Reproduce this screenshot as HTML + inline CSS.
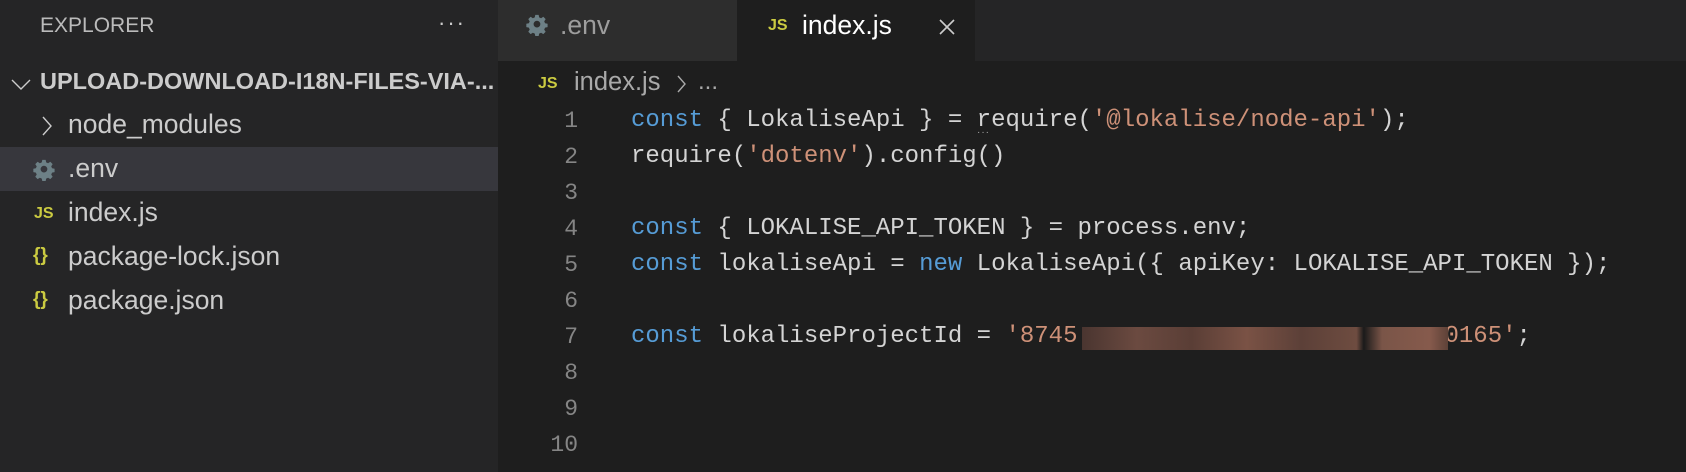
<!DOCTYPE html>
<html><head><meta charset="utf-8"><style>
*{margin:0;padding:0;box-sizing:border-box}
body{width:1686px;height:472px;overflow:hidden;background:#1e1e1e;font-family:"Liberation Sans",sans-serif;position:relative}
.side{position:absolute;left:0;top:0;width:498px;height:472px;background:#252526}
.t{position:absolute;white-space:pre;color:#cccccc}
.tabbar{position:absolute;left:498px;top:0;width:1188px;height:61px;background:#252526}
.code{position:absolute;font-family:"Liberation Mono",monospace;font-size:24px;white-space:pre;color:#d4d4d4;line-height:36px}
.k{color:#569cd6}.s{color:#ce9178}
.ln{position:absolute;left:520px;width:58px;text-align:right;font-family:"Liberation Mono",monospace;font-size:23px;color:#858585;line-height:36px}
.js{font-family:"Liberation Sans",sans-serif;font-weight:bold;color:#cbcb41;font-size:16px;position:absolute}
</style></head><body>
<div class="side"></div>
<div class="t" style="left:40px;top:14px;font-size:21px;color:#bbbbbb">EXPLORER</div>
<div class="t" style="left:438px;top:10px;font-size:22px;color:#cccccc;letter-spacing:2px">···</div>
<svg style="position:absolute;left:10px;top:76px" width="22" height="16"><path d="M2 4 L11 13 L20 4" stroke="#cccccc" stroke-width="1.4" fill="none"/></svg>
<div class="t" style="left:40px;top:68px;font-size:23.5px;font-weight:bold;color:#cccccc">UPLOAD-DOWNLOAD-I18N-FILES-VIA-...</div>
<svg style="position:absolute;left:40px;top:115px" width="14" height="22"><path d="M3 2 L11 11 L3 20" stroke="#cccccc" stroke-width="1.4" fill="none"/></svg>
<div class="t" style="left:68px;top:109px;font-size:26.5px">node_modules</div>
<div style="position:absolute;left:0;top:147px;width:498px;height:44px;background:#37373d"></div>
<svg style="position:absolute;left:33px;top:159px" width="22" height="22" viewBox="0 0 24 24"><path fill="#6d8086" d="M10 1h4l.6 3 2.3 1 2.6-1.7 2.8 2.8L20.6 8.7l1 2.3 3 .6v4l-3 .6-1 2.3 1.7 2.6-2.8 2.8-2.6-1.7-2.3 1-.6 3h-4l-.6-3-2.3-1-2.6 1.7-2.8-2.8 1.7-2.6-1-2.3-3-.6v-4l3-.6 1-2.3L1.7 6.1 4.5 3.3 7.1 5l2.3-1z M12 8a4 4 0 1 0 0 8a4 4 0 1 0 0-8z" transform="scale(.92) translate(1 0)"/></svg>
<div class="t" style="left:68px;top:153px;font-size:26.5px">.env</div>
<div class="js" style="left:34px;top:205px">JS</div>
<div class="t" style="left:68px;top:197px;font-size:26.5px">index.js</div>
<div class="t" style="left:33px;top:245px;font-size:19px;font-weight:bold;color:#cbcb41">{}</div>
<div class="t" style="left:68px;top:241px;font-size:26.5px">package-lock.json</div>
<div class="t" style="left:33px;top:289px;font-size:19px;font-weight:bold;color:#cbcb41">{}</div>
<div class="t" style="left:68px;top:285px;font-size:26.5px">package.json</div>

<div class="tabbar"></div>
<div style="position:absolute;left:498px;top:0;width:239px;height:61px;background:#2d2d2d"></div>
<svg style="position:absolute;left:526px;top:14px" width="22" height="22" viewBox="0 0 24 24"><path fill="#6d8086" d="M10 1h4l.6 3 2.3 1 2.6-1.7 2.8 2.8L20.6 8.7l1 2.3 3 .6v4l-3 .6-1 2.3 1.7 2.6-2.8 2.8-2.6-1.7-2.3 1-.6 3h-4l-.6-3-2.3-1-2.6 1.7-2.8-2.8 1.7-2.6-1-2.3-3-.6v-4l3-.6 1-2.3L1.7 6.1 4.5 3.3 7.1 5l2.3-1z M12 8a4 4 0 1 0 0 8a4 4 0 1 0 0-8z" transform="scale(.92) translate(1 0)"/></svg>
<div class="t" style="left:560px;top:10px;font-size:26.5px;color:#9d9d9d">.env</div>
<div style="position:absolute;left:737px;top:0;width:238px;height:61px;background:#1e1e1e"></div>
<div class="js" style="left:768px;top:17px">JS</div>
<div class="t" style="left:802px;top:10px;font-size:26.5px;color:#ffffff">index.js</div>
<svg style="position:absolute;left:938px;top:18px" width="18" height="18"><path d="M2 2L16 16M16 2L2 16" stroke="#cccccc" stroke-width="1.6"/></svg>

<div class="js" style="left:538px;top:75px">JS</div>
<div class="t" style="left:574px;top:68px;font-size:25.5px;color:#a9a9a9">index.js</div>
<svg style="position:absolute;left:676px;top:74px" width="12" height="20"><path d="M2 2L9 10L2 18" stroke="#a9a9a9" stroke-width="1.4" fill="none"/></svg>
<div class="t" style="left:698px;top:68px;font-size:24px;color:#a9a9a9">...</div>

<div class="ln" style="top:103px">1<br>2<br>3<br>4<br>5<br>6<br>7<br>8<br>9<br>10</div>
<div class="code" style="left:631px;top:103px"><span class="k">const</span> { LokaliseApi } = require(<span class="s">'@lokalise/node-api'</span>);
require(<span class="s">'dotenv'</span>).config()

<span class="k">const</span> { LOKALISE_API_TOKEN } = process.env;
<span class="k">const</span> lokaliseApi = <span class="k">new</span> LokaliseApi({ apiKey: LOKALISE_API_TOKEN });

<span class="k">const</span> lokaliseProjectId = <span class="s">'8745</span><span style="display:inline-block;width:367px"></span><span class="s">0165'</span>;</div>
<div style="position:absolute;left:977px;top:127px;color:#aaa;font-size:10px;letter-spacing:1px">···</div>
<div style="position:absolute;left:1082px;top:327px;width:366px;height:23px;background:linear-gradient(90deg,#4a3530,#6b4a40 15%,#5a3e36 30%,#7a5245 45%,#5c4038 60%,#6e4c40 75%,#1a1a1a 77%,#7a5548 82%,#865a4c 95%,#5e4238)"></div>
</body></html>
